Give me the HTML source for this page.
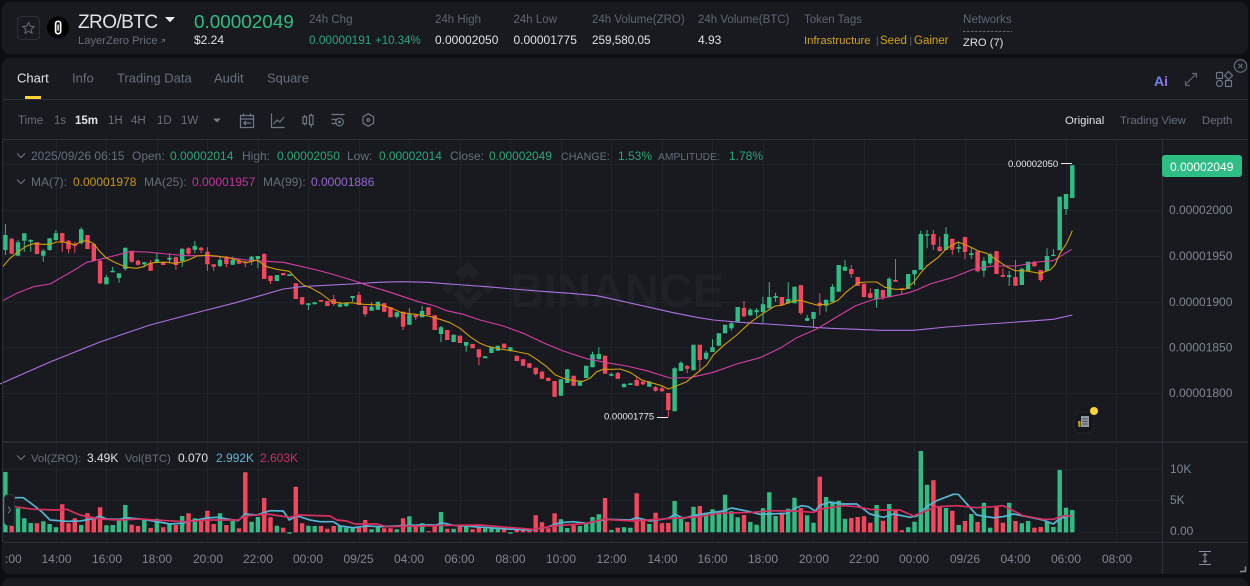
<!DOCTYPE html>
<html><head><meta charset="utf-8"><title>ZRO/BTC</title>
<style>
html,body{margin:0;padding:0;background:#0c0e12;width:1250px;height:586px;overflow:hidden}
svg{display:block;position:absolute;left:0;top:0}
text{font-family:"Liberation Sans",sans-serif;font-size:12px;fill:#848e9c}
.d{fill:#5e6673}.w{fill:#dfe2e6}.g{fill:#2ebd85}.y{fill:#d6a30b}.lg{fill:#26a67a}
.n{fill:#676f7c;font-size:13px}
.l{fill:#666e7b}.p{fill:#7f8692}
.gr{stroke:#1f242b;stroke-width:1;fill:none}
.ic{stroke:#6f7885;stroke-width:1.2;fill:none}
</style></head><body>
<svg id="s" width="1250" height="586" viewBox="0 0 1250 586" xmlns="http://www.w3.org/2000/svg">
<rect x="2" y="2" width="1246" height="52" rx="8" fill="#181a20"/>
<rect x="2" y="58" width="1246" height="516" rx="8" fill="#181a20"/>
<rect x="2" y="578" width="1246" height="30" rx="8" fill="#181a20"/>

<!-- header -->
<rect x="17.5" y="16.5" width="22" height="23" rx="4" fill="none" stroke="#2b3139"/>
<path d="M28.5 22.5l1.7 3.6 3.9.5-2.9 2.7.8 3.9-3.5-2-3.5 2 .8-3.9-2.9-2.7 3.9-.5z" fill="none" stroke="#5e6673" stroke-width="1.1"/>
<circle cx="58" cy="27.5" r="11" fill="#000"/>
<rect x="55.6" y="21.3" width="5" height="12.4" rx="2.5" fill="none" stroke="#fff" stroke-width="1.7"/>
<path d="M58.1 24.5v6.2" stroke="#fff" stroke-width="1.3"/>
<text x="78" y="28" style="font-size:19px;letter-spacing:-.55px" class="w">ZRO/BTC</text>
<path d="M165 17h10l-5 5.2z" fill="#eaecef"/>
<text x="78" y="44" style="font-size:11.2px;fill:#656d7a">LayerZero Price</text>
<path d="M161.5 42.5l3-3M162 39.4h2.6V42" stroke="#656d7a" stroke-width=".8" fill="none"/>
<text x="194" y="28" class="g" style="font-size:18.9px">0.00002049</text>
<text x="194" y="44" class="w">$2.24</text>
<text x="309" y="23" class="d" style="font-size:11.5px">24h Chg</text>
<text x="309" y="44" class="lg" style="font-size:11.8px">0.00000191</text>
<text x="375" y="44" class="lg" style="font-size:11.5px">+10.34%</text>
<text x="435" y="23" class="d" style="font-size:11.5px">24h High</text><text x="435" y="44" class="w">0.00002050</text>
<text x="513.5" y="23" class="d" style="font-size:11.5px">24h Low</text><text x="513.5" y="44" class="w">0.00001775</text>
<text x="592" y="23" class="d" style="font-size:11.5px">24h Volume(ZRO)</text><text x="592" y="44" class="w" style="font-size:11.7px">259,580.05</text>
<text x="698" y="23" class="d" style="font-size:11.5px">24h Volume(BTC)</text><text x="698" y="44" class="w">4.93</text>
<text x="804" y="23" class="d" style="font-size:11.5px">Token Tags</text>
<text x="804" y="44" class="y" style="font-size:11.3px">Infrastructure</text><text x="876" y="44" class="d" style="font-size:10px">|</text>
<text x="880" y="44" class="y" style="font-size:11.5px">Seed</text><text x="909.5" y="44" class="d" style="font-size:10px">|</text>
<text x="914" y="44" class="y" style="font-size:11.5px">Gainer</text>
<text x="963" y="23" class="d" style="font-size:11.7px">Networks</text>
<path d="M963 31.5h49" stroke="#5e6673" stroke-dasharray="2.5 1.5"/>
<text x="963" y="46" class="w" style="font-size:11.2px">ZRO (7)</text>

<!-- tabs -->
<text x="17" y="82.5" class="n" style="fill:#dfe2e6">Chart</text>
<text x="72" y="82.5" class="n">Info</text>
<text x="117" y="82.5" class="n">Trading Data</text>
<text x="214" y="82.5" class="n">Audit</text>
<text x="267" y="82.5" class="n">Square</text>
<path d="M2 99.5H1248M2 139.5H1248" stroke="#2b3139"/>
<rect x="25" y="96" width="16" height="3" fill="#fcd535"/>
<circle cx="1240.5" cy="66" r="6.2" fill="none" stroke="#6f7885" stroke-width="1"/>
<path d="M1238.3 63.8l4.4 4.4m0-4.4l-4.4 4.4" stroke="#6f7885"/>
<defs><linearGradient id="ai" x1="0" x2="1"><stop offset="0" stop-color="#5b8cf0"/><stop offset="1" stop-color="#a66ee8"/></linearGradient></defs>
<text x="1154" y="86" style="font-size:14px;font-weight:bold;fill:url(#ai)">Ai</text>
<path d="M1185.5 84.500l10-10M1192 73.500h4.500V78M1185.500 81v4.500h4.500" fill="none" stroke="#5e6673" stroke-width="1.2"/>
<g class="ic" stroke="#848e9c"><rect x="1216.5" y="72.5" width="6" height="6" rx=".5"/><path d="M1228.5 71.5l4 4-4 4-4-4z"/><circle cx="1219.5" cy="83.5" r="3"/><rect x="1225.5" y="80.5" width="6" height="6" rx=".5"/></g>

<!-- toolbar -->
<text x="18" y="124" style="font-size:11.5px" class="l">Time</text>
<text x="54" y="124" style="font-size:11.5px" class="l">1s</text>
<text x="75" y="124" style="font-size:11.5px;font-weight:bold" class="w">15m</text>
<text x="108" y="124" style="font-size:11.5px" class="l">1H</text>
<text x="131" y="124" style="font-size:11.5px" class="l">4H</text>
<text x="157" y="124" style="font-size:11.5px" class="l">1D</text>
<text x="181" y="124" style="font-size:11.5px" class="l">1W</text>
<path d="M213 118.5h8l-4 4z" fill="#6f7885"/>
<g class="ic"><rect x="240.5" y="115.5" width="13" height="12"/><path d="M240.5 119h13M243.5 113.5v3M250.5 113.5v3M251 123h-7M246 120.8l-2.2 2.2 2.2 2.2"/>
<path d="M271.5 113.5v14h13M273.5 124l3.5-4 3 2 4-5"/>
<rect x="303" y="117" width="3.5" height="6.5"/><path d="M304.7 115v2M304.7 123.500v2"/><rect x="309.500" y="115.500" width="3.500" height="9"/><path d="M311.200 113.500v2M311.200 124.500v3"/>
<path d="M331.500 114.500h13M331.500 119.500h5M331.500 123.500h4"/><circle cx="339.500" cy="122" r="3.800"/><circle cx="339.500" cy="122" r=".8" fill="#6f7885"/>
<path d="M368.300 113.800l5.300 3.100v6.200l-5.300 3.100-5.300-3.100v-6.200z"/><circle cx="368.300" cy="120" r="1.500"/></g>
<text x="1065" y="124" style="font-size:11.400px" class="w">Original</text>
<text x="1120" y="124" style="font-size:11.400px" class="l">Trading View</text>
<text x="1202" y="124" style="font-size:11.400px" class="l">Depth</text>

<!-- watermark -->
<g fill="#1f2127"><path d="M468 261l12 12-7 7-5-5-5 5-7-7zM448 281l7 7-7 7-7-7zM488 281l7 7-7 7-7-7zM468 281l7 7-7 7-7-7zM453 295l5-5 10 10 10-10 5 5-15 15z"/></g>
<text x="510" y="307" style="font-size:47px;font-weight:bold;fill:#1f2127">BINANCE</text>

<path id="grid" class="gr" d=""/>
<g id="vol"></g><g id="cand"></g><g id="lines"></g>

<!-- frame lines -->
<path d="M1162.500 140V574M2.500 140V542" stroke="#2b3139" stroke-width="1"/>
<path d="M3 442H1248" stroke="#2b3139" stroke-width="1.500"/>
<path d="M3 542.500H1248" stroke="#2b3139"/>

<!-- legends -->
<path d="M17 153.500l4 4 4-4M17 179.500l4 4 4-4M17 455.500l4 4 4-4" fill="none" stroke="#6f7885" stroke-width="1"/>
<text x="31" y="160" class="l">2025/09/26 06:15</text>
<text x="132" y="160" class="l">Open:</text><text x="170" y="160" class="lg">0.00002014</text>
<text x="242" y="160" class="l">High:</text><text x="277" y="160" class="lg" style="font-size:11.9px">0.00002050</text>
<text x="347" y="160" class="l">Low:</text><text x="379" y="160" class="lg" style="font-size:11.9px">0.00002014</text>
<text x="450" y="160" class="l">Close:</text><text x="489" y="160" class="lg" style="font-size:11.9px">0.00002049</text>
<text x="561" y="160" class="l" style="font-size:10.7px">CHANGE:</text><text x="618" y="160" class="lg">1.53%</text>
<text x="658" y="160" class="l" style="font-size:10.3px">AMPLITUDE:</text><text x="729" y="160" class="lg">1.78%</text>
<text x="31" y="186" class="l">MA(7):</text><text x="73" y="186" style="fill:#c99a08">0.00001978</text>
<text x="144" y="186" class="l">MA(25):</text><text x="192" y="186" style="fill:#c4329a">0.00001957</text>
<text x="263" y="186" class="l">MA(99):</text><text x="311" y="186" style="fill:#9468d2">0.00001886</text>
<text x="31" y="462" class="l" style="font-size:11.300px">Vol(ZRO):</text><text x="87" y="462" class="w">3.49K</text>
<text x="125" y="462" class="l" style="font-size:11.300px">Vol(BTC)</text><text x="178" y="462" class="w">0.070</text>
<text x="216" y="462" style="fill:#5ab8d0">2.992K</text><text x="260" y="462" style="fill:#c8305f">2.603K</text>

<!-- price axis -->
<rect x="1162" y="155" width="80" height="22" rx="3" fill="#2ebd85"/>
<text x="1170" y="171" style="fill:#fff">0.00002049</text>
<g class="p"><text x="1169" y="214" class="p">0.00002000</text><text x="1169" y="260" class="p">0.00001950</text><text x="1169" y="306" class="p">0.00001900</text><text x="1169" y="351.500" class="p">0.00001850</text><text x="1169" y="397" class="p">0.00001800</text>
<text x="1170" y="473" class="p">10K</text><text x="1170" y="504" class="p">5K</text><text x="1170" y="535" class="p">0.00</text></g>

<!-- markers -->
<text x="1008" y="167" style="font-size:9.500px;fill:#eaecef">0.00002050</text>
<path d="M1061 163.500h11" stroke="#eaecef"/>
<text x="604" y="419.500" style="font-size:9.500px;fill:#eaecef">0.00001775</text>
<path d="M657 417.500h11" stroke="#eaecef"/>

<!-- news bubble -->
<rect x="1074" y="412" width="20" height="21" rx="6" fill="#15171c" stroke="#21252c"/>
<rect x="1081" y="416" width="8" height="11" fill="#8f97a3"/>
<path d="M1082.500 419h5M1082.500 421.500h5M1082.500 424h5" stroke="#4a505a"/>
<path d="M1078 421h2.500v6h-2z" fill="#c99a0a"/>
<circle cx="1094" cy="411" r="4" fill="#fcd535"/>

<!-- left handle -->
<rect x="4.500" y="494.500" width="10" height="31" rx="4" fill="#181a20" stroke="#2b3139"/>
<path d="M8 506.500l2.500 3.500-2.500 3.500" fill="none" stroke="#6f7885"/>

<!-- time axis -->
<g id="ta">
<text x="5" y="563" class="p">:00</text>
<text x="56.500" y="563" class="p" text-anchor="middle">14:00</text>
<text x="107" y="563" class="p" text-anchor="middle">16:00</text>
<text x="157" y="563" class="p" text-anchor="middle">18:00</text>
<text x="208" y="563" class="p" text-anchor="middle">20:00</text>
<text x="258" y="563" class="p" text-anchor="middle">22:00</text>
<text x="308" y="563" class="p" text-anchor="middle">00:00</text>
<text x="358.500" y="563" class="p" text-anchor="middle">09/25</text>
<text x="409" y="563" class="p" text-anchor="middle">04:00</text>
<text x="459.500" y="563" class="p" text-anchor="middle">06:00</text>
<text x="510.500" y="563" class="p" text-anchor="middle">08:00</text>
<text x="561" y="563" class="p" text-anchor="middle">10:00</text>
<text x="611.500" y="563" class="p" text-anchor="middle">12:00</text>
<text x="662.500" y="563" class="p" text-anchor="middle">14:00</text>
<text x="712.500" y="563" class="p" text-anchor="middle">16:00</text>
<text x="763" y="563" class="p" text-anchor="middle">18:00</text>
<text x="814" y="563" class="p" text-anchor="middle">20:00</text>
<text x="864" y="563" class="p" text-anchor="middle">22:00</text>
<text x="914" y="563" class="p" text-anchor="middle">00:00</text>
<text x="965" y="563" class="p" text-anchor="middle">09/26</text>
<text x="1015.500" y="563" class="p" text-anchor="middle">04:00</text>
<text x="1066" y="563" class="p" text-anchor="middle">06:00</text>
<text x="1117" y="563" class="p" text-anchor="middle">08:00</text>
</g>
<path d="M1199 551.500h12M1199 564.500h12M1205 553.500v9M1203 555.500l2-2 2 2M1203 560.500l2 2 2-2" fill="none" stroke="#848e9c" stroke-width="1"/>
<path d="M1240 571.500h5.500v-5" fill="none" stroke="#848e9c" stroke-width="1.500"/>
</svg>
<script>
var NS='http://www.w3.org/2000/svg';
function P(parent,attrs){var e=document.createElementNS(NS,'path');for(var k in attrs)e.setAttribute(k,attrs[k]);document.getElementById(parent).appendChild(e);}
var groups=[
[210,"g75,120,42,135 r86,131,83,133 g97,137,90,137 g70,92,70,125 g90,95,88,125 r97,132,97,133 g122,137,118,155 g85,120,85,122 g70,90,60,92 r70,97,68,125 r92,117,90,130 r103,107,95,128 g58,100,52,103 r75,117,75,117 r102,152,100,155 r152,220,150,223 g202,223,195,223 g182,187,170,187 g190,204,190,218 g113,177,113,182 r122,155,122,158 r152,164,150,167 g157,163,155,172 r158,182,150,183 g148,158,127,160 r155,165,155,165 g143,149,130,160 r142,165,140,180 g116,153,115,170 r115,131,112,135 g108,119,93,130 r113,121,110,130 r125,163,112,183 r163,170,163,183 g150,168,140,172 r140,162,138,172 g150,164,140,165 r153,161,145,162 r155,160,152,172 g140,155,138,165 g138,147,138,175 r132,207,130,207 r197,213,197,222 g195,213,195,213 r189,196,189,196 g193,198,193,198"],
[270,"r40,87,40,87 r82,103,82,105 g100,105,100,120 g97,103,97,103 r90,95,90,95 r93,108,93,108 r87,102,75,108 g103,110,95,112 g100,108,97,110 g78,84,78,95 r75,105,65,105 r108,133,108,140 g110,122,97,122 g95,119,95,119 r100,125,100,125 r112,142,112,142 g127,140,127,145 r125,170,125,180 g133,164,115,164 r135,142,135,150"],
[240,"g213,232,198,232 r202,225,202,225 r226,270,226,270 g262,282,258,307 r270,300,270,300 g284,306,284,306 r287,309,287,309 g306,317,306,335 r312,325,312,325 r328,352,328,376 g349,355,349,355 g320,339,320,339 g317,332,317,332 r311,325,311,325 g322,332,322,335 r347,363,347,363 r358,377,358,377 r370,383,370,383 r383,402,383,406 r395,416,392,418 r413,423,413,423 r423,470,423,470 g418,467,418,467 g388,429,388,429 r407,437,407,437 g424,437,424,437 g377,414,377,414 g343,382,335,382 g342,358,322,358 r347,401,347,401 g402,407,398,408 r399,416,396,416 g432,442,430,442 g430,435,430,435 r420,437,412,437 r425,433,420,435 g425,440,422,440 r442,452,438,455 r445,454,436,455 r459,510,459,530 g385,514,382,514 g368,393,364,393 r378,386,375,400 g314,391,314,391 r314,360,314,395 g338,356,332,360 g322,336,297,336 g280,317,280,317 g254,280,254,280 g250,265,245,272 g201,246,201,246 r204,229,183,232 g209,226,205,228 g210,217,204,230 g193,216,170,248 g171,205,126,205 g168,174,158,186 r171,196,171,196 g177,190,127,192 g140,190,140,190 r136,219,136,225 g234,242,225,243 g216,236,216,260 r188,198,160,225 g179,197,179,215"],
[140,"g440,486,432,486 g375,455,375,455 g380,392,360,392 r387,402,375,413 r411,437,411,437 r431,471,431,471 r460,474,445,474 g447,478,447,503 r450,472,450,480 g416,472,412,472 r420,425,357,425 r445,450,445,462 g402,447,402,447 g390,403,390,435 g282,389,272,389 g283,287,270,325 r282,314,270,330 r320,333,290,335 g282,330,262,330 r296,329,296,345 g321,326,305,338 r291,336,291,358 g340,345,325,357 r334,394,334,397 g362,392,352,410 g343,370,338,375 r334,402,332,402 r405,410,385,412 g406,411,392,437 r411,437,360,437 g386,435,383,435 g365,393,365,393 r365,379,362,380 r390,420,390,425 g348,392,325,392 g344,348,327,348 g170,331,170,331 g162,207,162,225 g76,174,76,174"]
];
var GC='#2ebd85',RC='#f6465d';
function X(i){return 5.4+6.313*i;}
var cols=[],gB='',rB='',gW='',rW='',idx=0;
groups.forEach(function(g){var b=g[0];g[1].split(' ').forEach(function(s){
  var c=s[0],a=s.slice(1).split(',').map(function(v){return b+v/3;}),x=X(idx);
  cols.push(c);
  var body='M'+(x-2.2).toFixed(1)+' '+a[0].toFixed(1)+'h4.4V'+Math.max(a[1],a[0]+1).toFixed(1)+'h-4.4z';
  var wick='M'+x.toFixed(1)+' '+a[2].toFixed(1)+'V'+a[3].toFixed(1);
  if(c=='g'){gB+=body;gW+=wick;}else{rB+=body;rW+=wick;}
  idx++;
});});
P('cand',{d:gW,stroke:GC,'stroke-width':1,fill:'none'});
P('cand',{d:rW,stroke:RC,'stroke-width':1,fill:'none'});
P('cand',{d:gB,fill:GC});
P('cand',{d:rB,fill:RC});
var vt=[96,258,205,235,249,250,244,252,262,193,250,235,255,220,236,202,256,255,240,195,254,258,238,264,236,262,253,255,228,220,235,240,212,252,220,255,243,265,97,245,231,174,232,257,263,281,140,250,257,258,258,266,258,258,263,262,263,240,268,258,265,265,268,235,229,258,
250,274,258,216,266,266,258,258,268,260,265,265,265,268,281,270,270,272,226,247,265,220,238,264,256,258,250,231,223,174,270,263,262,263,160,238,252,218,250,249,183,237,246,200,198,218,208,216,164,214,232,225,246,254,205,157,228,218,206,173,204,226,248,110,171,
185,182,236,234,231,229,248,195,242,192,210,271,262,245,33,134,121,200,204,212,255,243,222,246,188,263,197,248,188,243,250,243,263,261,245,261,90,203,210];
var vg='',vr='';
vt.forEach(function(t,i){var x=X(i),y=440+t/3,base=440+277/3;var y0=Math.min(y,base),h=Math.abs(base-y);
  var d='M'+(x-2.2).toFixed(1)+' '+y0.toFixed(1)+'h4.4v'+h.toFixed(1)+'h-4.4z';
  if(cols[i]=='g')vg+=d;else vr+=d;});
P('vol',{d:vg,fill:GC});P('vol',{d:vr,fill:RC});
function L(segs,col,w,par){var pts=[];segs.forEach(function(s){var a=s[2];for(var i=0;i<a.length;i+=2)pts.push((s[0]+a[i]/3).toFixed(1)+' '+(s[1]+a[i+1]/3).toFixed(1));});
  P(par||'lines',{d:'M'+pts.join('L'),fill:'none',stroke:col,'stroke-width':w,'stroke-linejoin':'round'});}
L([[0,0,[0,1152,150,1086,300,1026,450,975]],[0,140,[620,510,700,490,770,470,850,447]],[285,270,[50,50,100,47,200,42,280,37,350,35,430,37]],
[420,240,[60,130,130,135,200,140,280,147,380,155,450,160,530,167,600,182,680,200,760,218,830,232,880,240,960,247,1040,252,1120,257,1200,263]],
[830,140,[0,565,80,568,150,571,250,571,350,561,430,555,520,549,590,544,670,538,727,525]]],'#a874e0',1.1);
L([[0,210,[8,272,50,250,100,230,150,222,180,205,220,182,260,157,300,148,340,138,390,125,440,126,500,132,560,137,620,137,680,142,740,150,800,154,850,157]],
[285,270,[95,0,140,12,200,30,250,47,310,65,370,85,400,95,450,108]],
[420,240,[80,212,130,223,180,240,250,258,310,280,370,308,430,333,500,356,560,368,620,378,680,392,750,414,810,413,880,397,950,372,1020,353,1080,325,1130,293,1190,267]],
[830,140,[0,543,30,525,75,498,125,480,180,470,230,460,260,450,300,432,370,412,430,388,490,378,560,378,620,366,670,362,725,328]]],'#d43fa0',1.1);
L([[0,210,[8,170,30,145,55,125,80,108,100,101,130,103,150,103,170,96,190,96,210,101,225,104,245,94,262,92,280,100,300,125,320,145,350,160,380,172,410,175,430,170,450,160,470,157,500,157,525,160,550,155,570,148,590,138,620,136,650,138,680,142,710,150,740,158,770,150,800,170,830,178,868,184]],
[285,270,[30,22,55,45,80,55,110,72,140,95,170,100,200,98,235,103,290,105,320,115,350,128,390,133,430,138]],
[420,240,[60,238,90,248,120,265,150,290,180,310,200,318,240,327,280,333,325,342,350,358,380,380,405,404,430,415,460,422,490,424,510,415,530,395,550,388,580,388,600,387,630,397,665,420,700,430,725,437,745,447,770,437,800,425,830,400,860,375,880,345,910,317,950,285,990,248,1030,220,1065,198,1085,196,1125,181,1145,182,1190,195]],
[830,140,[0,492,25,480,50,455,85,428,110,426,140,426,165,442,195,448,225,448,250,428,275,395,290,378,325,352,350,325,385,306,420,320,445,333,470,340,500,360,530,380,555,392,590,393,630,400,660,390,675,375,690,340,710,310,727,272]]],'#d29f08',1.1);
L([[0,440,[45,173,70,173,100,195,125,215,150,240,200,244,240,243,270,238,300,229,320,237,360,238,380,233,420,237,460,243,510,252,545,250,580,242,620,234,650,232,680,237,715,242,735,222,770,225,810,212,850,213,868,240,890,227,930,240,960,245,1000,245,1020,258,1060,263,1100,258,1140,260,1190,258]],
[420,440,[0,255,50,255,65,248,100,256,190,262,260,267,330,270,380,262,420,248,460,245,500,250,560,238,630,240,650,233,690,243,745,235,765,223,790,235,830,225,880,217,910,213,935,204,990,215,1020,223,1100,220,1125,205,1145,197,1165,200,1185,213,1200,196]],
[830,440,[0,186,35,192,80,192,120,222,160,232,190,222,240,232,260,228,290,200,320,182,370,163,385,163,440,225,490,233,520,230,550,222,600,232,640,240,670,252,690,235,727,225]]],'#56b6d4',1.7);
L([[0,440,[45,200,100,208,170,210,200,208,240,225,300,237,360,240,420,237,500,242,560,245,620,240,715,240,735,228,800,222,870,232,895,225,990,228,1010,240,1040,243,1065,252,1130,252,1160,260]],
[420,440,[0,258,100,256,180,255,260,262,340,268,400,258,500,250,550,238,640,243,760,235,830,231,900,220,1000,217,1050,212,1120,213,1180,217,1210,206]],
[830,440,[0,203,40,197,80,200,120,208,160,210,210,210,250,228,320,200,380,197,440,203,490,200,520,197,580,227,640,238,670,238,700,227,727,228]]],'#d6305f',1.7);
var gd='';
[164.5,210.5,256.5,302.5,347.5,393.5,469.5,500.5,532.5].forEach(function(y){gd+='M3 '+y+'H1162';});
for(var x=55.5;x<1162;x+=50.5){var xx=Math.round(x)+.5;gd+='M'+xx+' 140V441M'+xx+' 443V542';}
document.getElementById('grid').setAttribute('d',gd);
</script>
</body></html>
